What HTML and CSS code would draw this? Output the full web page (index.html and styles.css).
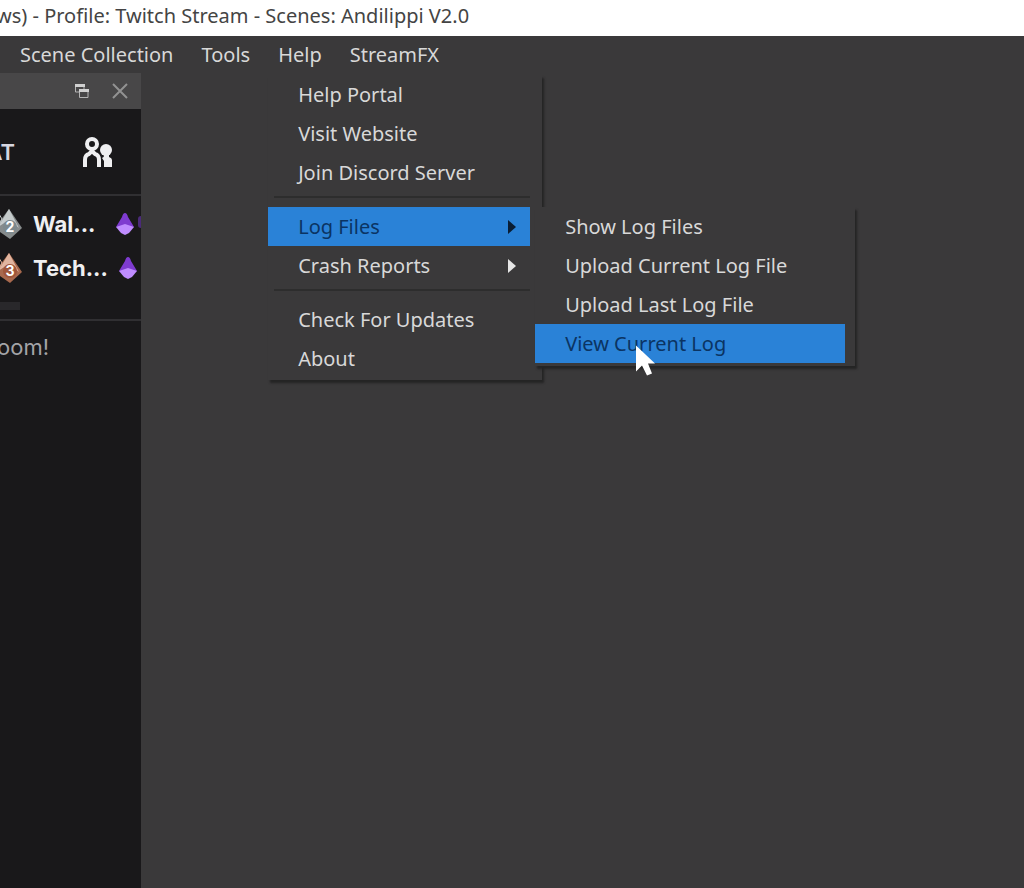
FILE: index.html
```html
<!DOCTYPE html>
<html lang="en">
<head>
    <meta charset="UTF-8">
    <meta name="viewport" content="width=device-width, initial-scale=1.0">
    <title>Profile: Twitch Stream - Scenes: Andilippi V2.0</title>
    <link rel="stylesheet" href="styles.css">
</head>
<body>
    <header class="title-bar">ws) - Profile: Twitch Stream - Scenes: Andilippi V2.0</header>

    <nav class="menu-bar">
        <button class="menu-button">Scene Collection</button>
        <button class="menu-button">Tools</button>
        <div class="menu-holder">
            <button class="menu-button" aria-expanded="true">Help</button>
            <div class="menu help-menu">
                <button class="menu-item">Help Portal</button>
                <button class="menu-item">Visit Website</button>
                <button class="menu-item">Join Discord Server</button>
                <hr class="separator">
                <div class="menu-holder">
                    <button class="menu-item active" aria-expanded="true">Log Files
                        <svg class="arrow" viewBox="0 0 8 14"><path d="M0 0L8 7L0 14Z"/></svg>
                    </button>
                    <div class="menu sub-menu">
                        <button class="menu-item">Show Log Files</button>
                        <button class="menu-item">Upload Current Log File</button>
                        <button class="menu-item">Upload Last Log File</button>
                        <button class="menu-item active">View Current Log</button>
                        <svg class="cursor" viewBox="0 0 20 31"><path d="M1 1V27L7 21L12 31L17 29L13 19H20Z"/></svg>
                    </div>
                </div>
                <button class="menu-item">Crash Reports
                    <svg class="arrow" viewBox="0 0 8 14"><path d="M0 0L8 7L0 14Z"/></svg>
                </button>
                <hr class="separator">
                <button class="menu-item">Check For Updates</button>
                <button class="menu-item">About</button>
            </div>
        </div>
        <button class="menu-button">StreamFX</button>
    </nav>

    <main class="workspace">
        <aside class="dock">
            <div class="dock-bar">
                <button class="dock-button" aria-label="Float">
                    <svg width="16" height="16" viewBox="0 0 16 16">
                        <path class="pane" d="M1.500 2H10V9H1.500Z"/>
                        <path class="pane" d="M5.500 7H14V14.500H5.500Z"/>
                        <path class="pane-top" d="M1 1H11V4H1ZM5 6H15V9H5Z"/>
                    </svg>
                </button>
                <button class="dock-button" aria-label="Close">
                    <svg width="16" height="16" viewBox="0 0 16 16"><path class="cross" d="M1 1L15 15M15 1L1 15"/></svg>
                </button>
            </div>
            <div class="chat-header">
                <h2 class="chat-title">AT</h2>
                <button class="dock-button" aria-label="Users">
                    <svg width="30" height="30" viewBox="0 0 30 30">
                        <circle class="person" cx="10" cy="7" r="5"/>
                        <path class="person" d="M3 30V23Q3 18 7 17L10 14L13 17Q17 18 17 23V30"/>
                        <circle class="person-fill" cx="24" cy="13" r="6"/>
                        <path class="person-fill" d="M22 17H27V20Q30 21 30 23V30H22V24L20 21Q22 20 22 19Z"/>
                    </svg>
                </button>
            </div>
            <div class="leaders">
                <div class="leader">
                    <svg class="rank silver" viewBox="0 0 26 30">
                        <path class="gem" d="M13 0L26 19L14 30L1 21V16Z"/>
                        <path class="shine" d="M13 0L2 18L13 11L23 19Z"/>
                        <path class="edge" d="M3 5L6 10L4 14"/>
                        <circle class="disc" cx="14" cy="18" r="7"/>
                        <text class="rank-number" x="14" y="23">2</text>
                    </svg>
                    <span class="name">Wal...</span>
                    <svg class="gift" viewBox="0 0 18 22">
                        <path class="gift-top" d="M9 0Q11 0 12 4L18 14H0L6 4Q7 0 9 0Z"/>
                        <path class="gift-base" d="M9 11L18 14L13 20L9 22L5 20L0 14Z"/>
                    </svg>
                    <span class="amount"></span>
                </div>
                <div class="leader">
                    <svg class="rank bronze" viewBox="0 0 26 30">
                        <path class="gem" d="M13 0L26 19L14 30L1 21V16Z"/>
                        <path class="shine" d="M13 0L2 18L13 11L23 19Z"/>
                        <path class="edge" d="M3 5L6 10L4 14"/>
                        <circle class="disc" cx="14" cy="18" r="7"/>
                        <text class="rank-number" x="14" y="23">3</text>
                    </svg>
                    <span class="name">Tech...</span>
                    <svg class="gift" viewBox="0 0 18 22">
                        <path class="gift-top" d="M9 0Q11 0 12 4L18 14H0L6 4Q7 0 9 0Z"/>
                        <path class="gift-base" d="M9 11L18 14L13 20L9 22L5 20L0 14Z"/>
                    </svg>
                </div>
                <div class="scroll-thumb"></div>
            </div>
            <p class="welcome">oom!</p>
        </aside>
    </main>
</body>
</html>
```
FILE: styles.css
```css
* {
    box-sizing: border-box;
}
body {
    margin: 0;
    min-height: 100vh;
    display: flex;
    flex-direction: column;
    overflow: hidden;
    background: #3a393a;
    color: #d8d8d8;
    font-family: "Noto Sans", "Open Sans", sans-serif;
    font-size: 20px;
}
button {
    background: none;
    border: none;
    padding: 0;
    color: inherit;
    font: inherit;
    white-space: nowrap;
    cursor: pointer;
}
.title-bar {
    height: 36px;
    margin-left: -4px;
    background: #fff;
    color: #444;
    line-height: 32px;
    white-space: nowrap;
}
.menu-bar {
    display: flex;
    gap: 28px;
    height: 37px;
    padding-left: 20px;
}
.menu-button {
    height: 37px;
}
.menu-holder {
    position: relative;
}
.menu {
    position: absolute;
    z-index: 1;
    background: #3a393a;
    box-shadow: 2px 3px 2px #242424;
}
.help-menu {
    top: 39px;
    left: -10px;
    width: 274px;
    padding: 0 12px 2px 0;
}
.sub-menu {
    top: 0;
    left: 267px;
    width: 320px;
    padding: 0 10px 3px 0;
}
.menu-item {
    display: flex;
    align-items: center;
    justify-content: space-between;
    width: 100%;
    height: 39px;
    padding: 0 14px 0 30px;
}
.menu-item.active {
    background: #2a82d7;
    color: #0b3463;
}
.arrow {
    width: 8px;
    height: 14px;
    fill: #e6e6e6;
}
.active .arrow {
    fill: #0a1d33;
}
.separator {
    height: 2px;
    margin: 4px 0 9px 6px;
    border: none;
    background: #2d2d2d;
}
.cursor {
    position: absolute;
    top: 137px;
    left: 100px;
    width: 20px;
    height: 32px;
    fill: #fff;
}
.workspace {
    flex: 1;
    display: flex;
}
.dock {
    width: 141px;
    overflow: hidden;
    background: #19181a;
    font-family: Inter, sans-serif;
}
.dock-bar {
    display: flex;
    align-items: center;
    justify-content: flex-end;
    gap: 22px;
    height: 36px;
    padding-right: 13px;
    background: #484748;
}
.dock-button {
    display: flex;
}
.pane {
    fill: #484748;
    stroke: #b4b4b4;
}
.pane-top {
    fill: #d0d0d0;
}
.cross {
    stroke: #929292;
    stroke-width: 2;
}
.chat-header {
    display: flex;
    align-items: center;
    justify-content: space-between;
    height: 87px;
    padding-right: 29px;
    border-bottom: 2px solid #302f32;
}
.chat-title {
    display: flex;
    justify-content: flex-end;
    width: 15px;
    margin: 0;
    color: #d6d6e0;
    font-size: 22px;
    font-weight: 600;
}
.person {
    fill: none;
    stroke: #efeff1;
    stroke-width: 4;
}
.person-fill {
    fill: #efeff1;
}
.leaders {
    height: 125px;
    padding-top: 6px;
    border-bottom: 2px solid #302f32;
}
.leader {
    display: flex;
    align-items: center;
    height: 44px;
    margin-left: -4px;
}
.rank {
    flex: none;
    width: 26px;
    height: 30px;
}
.silver {
    --gem: #868b8c;
    --shine: #c4cacb;
    --disc: #7d898e;
}
.bronze {
    --gem: #a8694e;
    --shine: #e1b5a0;
    --disc: #a0563b;
}
.gem {
    fill: var(--gem);
}
.shine {
    fill: var(--shine);
}
.edge {
    fill: none;
    stroke: var(--shine);
}
.disc {
    fill: var(--disc);
}
.rank-number {
    fill: #fff;
    font-size: 14px;
    font-weight: 700;
    text-anchor: middle;
}
.name {
    margin: 0 auto 0 11px;
    color: #efeff1;
    font-size: 22px;
    font-weight: 700;
}
.gift {
    flex: none;
    width: 18px;
    height: 22px;
    margin-right: 4px;
}
.gift-base {
    fill: #bf8cff;
}
.gift-top {
    fill: #7e3bd0;
}
.amount {
    width: 3px;
    height: 12px;
    margin-bottom: 4px;
    border-radius: 3px 0 0 3px;
    background: #4b2a7a;
}
.scroll-thumb {
    width: 20px;
    height: 8px;
    margin-top: 12px;
    background: #29282b;
}
.welcome {
    display: flex;
    justify-content: flex-end;
    width: 49px;
    margin: 12px 0;
    color: #a4a4a8;
    font-size: 22px;
    line-height: 28px;
}
```
